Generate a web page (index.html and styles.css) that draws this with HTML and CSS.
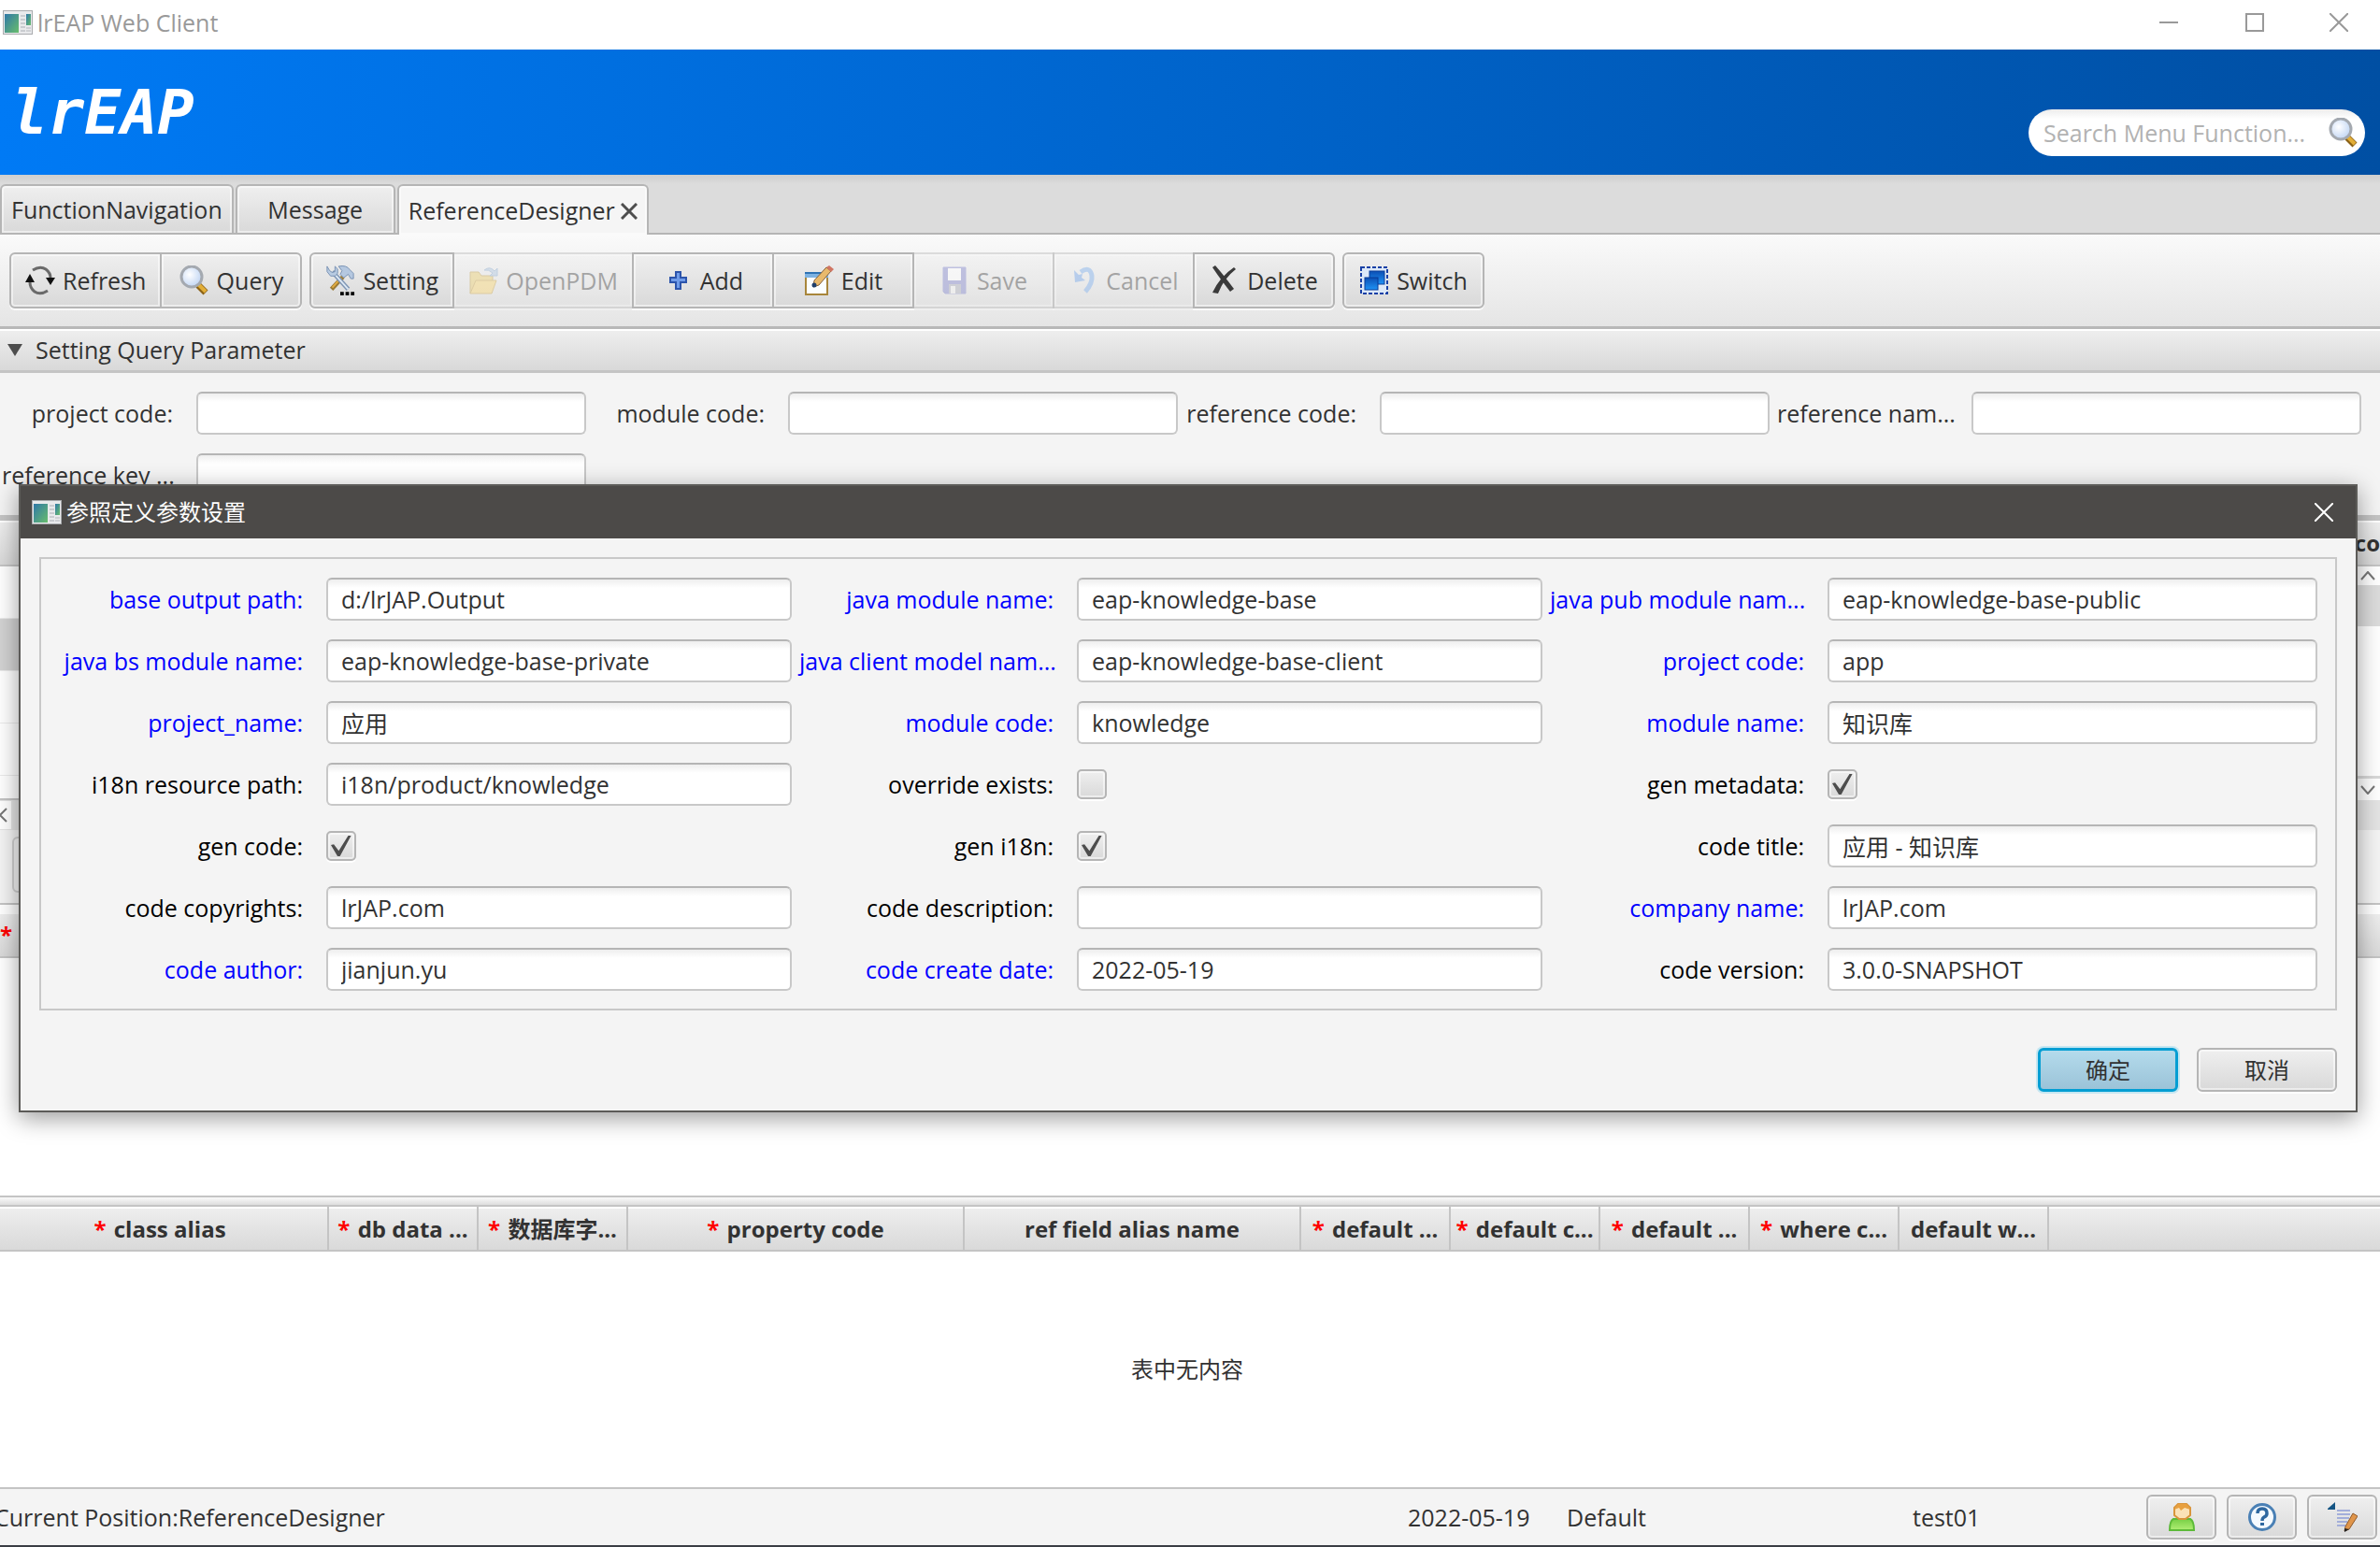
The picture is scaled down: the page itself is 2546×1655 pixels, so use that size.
FILE: index.html
```html
<!DOCTYPE html>
<html lang="en">
<head>
    <meta charset="UTF-8">
    <meta name="viewport" content="width=device-width, initial-scale=1.0">
    <title>lrEAP Web Client</title>
    <link rel="stylesheet" href="styles.css">
</head>
<body>
    <!-- Shared icons -->
    <svg class="defs" aria-hidden="true">
        <defs>
            <linearGradient id="g-app" x1="0" y1="0" x2="1" y2="1">
                <stop offset="0" stop-color="#2f78a8"/>
                <stop offset="1" stop-color="#69bd6c"/>
            </linearGradient>
            <radialGradient id="g-lens" cx="0.4" cy="0.4" r="0.7">
                <stop offset="0" stop-color="#ffffff"/>
                <stop offset="1" stop-color="#b9d0f2"/>
            </radialGradient>
            <linearGradient id="g-blue" x1="0" y1="0" x2="0" y2="1">
                <stop offset="0" stop-color="#0c4fb4"/>
                <stop offset="1" stop-color="#1f93f5"/>
            </linearGradient>
            <linearGradient id="g-green" x1="0" y1="0" x2="0" y2="1">
                <stop offset="0" stop-color="#77cf45"/>
                <stop offset="1" stop-color="#b0ee74"/>
            </linearGradient>
            <symbol id="i-app" viewBox="0 0 32 26">
                <rect x="0.5" y="0.5" width="31" height="25" fill="#e9eaec" stroke="#a9abae"/>
                <rect x="2" y="4" width="15" height="20" fill="url(#g-app)"/>
                <path d="M19 6h5M19 10h5M19 14h5M19 18h5M19 22h5" stroke="#bfc2c6" stroke-width="1.5"/>
                <rect x="25" y="4" width="5" height="12" fill="url(#g-app)"/>
                <path d="M25 19h5M25 22h5" stroke="#c5c8cb" stroke-width="1.5"/>
            </symbol>
            <symbol id="i-search" viewBox="0 0 32 32">
                <path d="M20 21l8 8" stroke="#8a6116" stroke-width="7"/>
                <path d="M20 20l8 8" stroke="#e2ae38" stroke-width="4"/>
                <circle cx="13" cy="12" r="11" fill="url(#g-lens)" stroke="#a4a9b0" stroke-width="3"/>
            </symbol>
            <symbol id="i-refresh" viewBox="0 0 32 32">
                <path d="M8 5Q16 0 22 4Q27 8 27 13M24 27Q16 32 10 28Q5 24 5 18" fill="none" stroke="#6a6a6a" stroke-width="3"/>
                <path d="M0 18L5 9l5 9zM22 13h10l-5 8z" fill="#111"/>
            </symbol>
            <symbol id="i-setting" viewBox="0 0 32 34">
                <path d="M19 13L6 27" stroke="#9b7a35" stroke-width="5"/>
                <path d="M17 14L7 25" stroke="#e3ac42" stroke-width="2"/>
                <path d="M7 7L25 27" stroke="#7e95b3" stroke-width="5"/>
                <path d="M8 8L25 27" stroke="#dce8f5" stroke-width="2"/>
                <path d="M1 1v6l4 5h5l3-3V4l-3-3v6l-3 1-3-2z" fill="#b8cbe2" stroke="#7690b2"/>
                <path d="M14 1q9-2 13 4l4 4v6h-3l-3-5-5 4-4-4 2-4z" fill="#b5c8e0" stroke="#7690b2"/>
                <path d="M16 30h4v4h-4zM22 30h4v4h-4zM28 30h4v4h-4z" fill="#000"/>
            </symbol>
            <symbol id="i-open" viewBox="0 0 32 32">
                <path d="M2 30V7h9l3 4h12v6" fill="#e7c65c" stroke="#b99334"/>
                <path d="M2 30l6-14h22l-5 14z" fill="#f6cf61" stroke="#c39a36"/>
                <path d="M17 5q6-5 11 1l3-3v8h-8l3-3q-4-4-9-3z" fill="#a5bedb" stroke="#7d9fc6"/>
            </symbol>
            <symbol id="i-add" viewBox="0 0 32 32">
                <path d="M14 7h5v6h6v5h-6v7h-5v-7H8v-5h6z" fill="#6f9be8" stroke="#2c54ab" stroke-width="2"/>
            </symbol>
            <symbol id="i-edit" viewBox="0 0 32 32">
                <rect x="2" y="8" width="23" height="23" fill="#fbfeff" stroke="#a8863b" stroke-width="2"/>
                <path d="M1 7h25v6H1z" fill="#7db2e2"/>
                <path d="M1 8h25" stroke="#2f73b4" stroke-width="2"/>
                <path d="M11 16L24 2l5 4-13 15-6 2z" fill="#e8b96c" stroke="#86613a"/>
                <path d="M24 2l3-2 5 4-3 3z" fill="#d07563"/>
                <circle cx="11" cy="21" r="2.5" fill="#1f3f6b"/>
            </symbol>
            <symbol id="i-save" viewBox="0 0 32 32">
                <path d="M4 2h24v28H6l-2-2z" fill="#7377c4" stroke="#7377c4"/>
                <rect x="9" y="3" width="14" height="13" fill="#fff"/>
                <path d="M10 20h13v10H10z" fill="#a0a3b2"/>
                <path d="M12 22h5v8h-5z" fill="#eee"/>
            </symbol>
            <symbol id="i-undo" viewBox="0 0 32 32">
                <path d="M13 7q10-7 12 4q1 8-7 17" fill="none" stroke="#6da3e8" stroke-width="5"/>
                <path d="M6 5l1 13 11-2-4-3 1-4-4 1z" fill="#6199e5"/>
            </symbol>
            <symbol id="i-delete" viewBox="0 0 32 32">
                <path d="M6 0q8 9 20 25l-4 3Q11 14 3 2z" fill="#3a3a3a"/>
                <path d="M26 2l2 2Q15 14 9 30l-6-1Q11 12 26 2z" fill="#3a3a3a"/>
            </symbol>
            <symbol id="i-switch" viewBox="0 0 32 32">
                <rect x="2" y="2" width="28" height="28" fill="#dce8f8" stroke="#1840a6" stroke-width="2" stroke-dasharray="4 2"/>
                <rect x="11" y="6" width="16" height="14" fill="url(#g-blue)" stroke="#0b3e99"/>
                <rect x="6" y="13" width="14" height="13" fill="url(#g-blue)" stroke="#083b96"/>
            </symbol>
            <symbol id="i-user" viewBox="0 0 32 32">
                <path d="M7 18h18q4 2 4 12H3Q3 20 7 18z" fill="url(#g-green)" stroke="#5cba38" stroke-width="2"/>
                <path d="M12 2h9l4 4v8l-5 4h-7l-5-4V6z" fill="#fbe2b6" stroke="#d9953b" stroke-width="2"/>
                <path d="M8 8l4-6h9l4 6-6-2-4 3-2-3z" fill="#e8a03f"/>
            </symbol>
            <symbol id="i-help" viewBox="0 0 32 32">
                <circle cx="16" cy="16" r="13.5" fill="#f5faff" stroke="#4a80b5" stroke-width="3"/>
                <path d="M11 12q0-5 5-5t5 5q0 3-3 4-2 1-2 4" fill="none" stroke="#2f68a0" stroke-width="3.5"/>
                <rect x="14" y="22" width="4" height="3" fill="#2f68a0"/>
            </symbol>
            <symbol id="i-log" viewBox="0 0 32 32">
                <path d="M0 7L8 0v8H0z" fill="#145483"/>
                <path d="M10 9h14M10 13h14M10 17h13M10 21h11M10 25h9" stroke="#a3aeda" stroke-width="2"/>
                <path d="M27 12l5 3-9 14-5 2 1-5z" fill="#e0954a" stroke="#8f5a2b"/>
                <path d="M18 28l5 1-5 3z" fill="#222"/>
            </symbol>
        </defs>
    </svg>

    <!-- Window title bar -->
    <div class="titlebar">
        <svg class="app-icon"><use href="#i-app"/></svg>
        <span class="window-title">lrEAP Web Client</span>
        <div class="window-btns">
            <button aria-label="Minimize"><svg viewBox="0 0 20 20"><path d="M0 10h20"/></svg></button>
            <button aria-label="Maximize"><svg viewBox="0 0 20 20"><path d="M1 1h18v18H1z"/></svg></button>
            <button aria-label="Close"><svg viewBox="0 0 20 20"><path d="M0 0l20 20M20 0L0 20"/></svg></button>
        </div>
    </div>

    <header class="header">
        <h1 class="logo">lrEAP</h1>
        <div class="search">
            <input type="text" aria-label="Search Menu Function" placeholder="Search Menu Function...">
            <svg class="icon"><use href="#i-search"/></svg>
        </div>
    </header>

    <nav class="tabs">
        <button class="tab">FunctionNavigation</button>
        <button class="tab">Message</button>
        <button class="tab active">ReferenceDesigner
            <svg class="tab-close" viewBox="0 0 18 18"><path d="M1 1l16 16M17 1L1 17"/></svg>
        </button>
    </nav>

    <!-- Toolbar -->
    <div class="toolbar">
        <div class="btn-group">
            <button><svg class="icon"><use href="#i-refresh"/></svg>Refresh</button>
            <button><svg class="icon"><use href="#i-search"/></svg>Query</button>
        </div>
        <div class="btn-group">
            <button><svg class="icon"><use href="#i-setting"/></svg>Setting</button>
            <button disabled><svg class="icon"><use href="#i-open"/></svg>OpenPDM</button>
            <button><svg class="icon"><use href="#i-add"/></svg>Add</button>
            <button><svg class="icon"><use href="#i-edit"/></svg>Edit</button>
            <button disabled><svg class="icon"><use href="#i-save"/></svg>Save</button>
            <button disabled><svg class="icon"><use href="#i-undo"/></svg>Cancel</button>
            <button><svg class="icon"><use href="#i-delete"/></svg>Delete</button>
        </div>
        <div class="btn-group">
            <button><svg class="icon"><use href="#i-switch"/></svg>Switch</button>
        </div>
    </div>

    <!-- Query parameters -->
    <button class="pane-title"><span class="arrow"></span>Setting Query Parameter</button>
    <form class="query-form">
        <div class="field"><label for="q-project">project code:</label><input type="text" id="q-project"></div>
        <div class="field"><label for="q-module">module code:</label><input type="text" id="q-module"></div>
        <div class="field"><label for="q-ref">reference code:</label><input type="text" id="q-ref"></div>
        <div class="field"><label for="q-name">reference nam...</label><input type="text" id="q-name"></div>
        <div class="field"><label for="q-key">reference key ...</label><input type="text" id="q-key"></div>
    </form>

    <!-- Reference list -->
    <section class="list">
        <div class="grid-head"><span class="head-end">co</span></div>
        <div class="list-body">
            <div class="rows">
                <div class="row"></div>
                <div class="row selected"></div>
                <div class="row"></div>
                <div class="row"></div>
                <div class="row last"></div>
            </div>
            <div class="vscroll">
                <button aria-label="Scroll up"><svg viewBox="0 0 16 10"><path d="M1 9l7-8 7 8"/></svg></button>
                <div class="thumb"></div>
                <button class="down" aria-label="Scroll down"><svg viewBox="0 0 16 10"><path d="M1 1l7 8 7-8"/></svg></button>
            </div>
        </div>
        <div class="hscroll">
            <button aria-label="Scroll left"><svg viewBox="0 0 10 16"><path d="M7 1L0 8l7 7"/></svg></button>
        </div>
    </section>
    <div class="sub-toolbar"><button class="sub-btn" aria-label="Add row"></button></div>

    <section class="detail">
        <div class="grid-head"><span class="req">*</span></div>
    </section>
    <div class="splitter"></div>

    <section class="params">
        <table class="grid">
            <colgroup>
                <col class="c-first"><col class="c-sm"><col class="c-sm"><col class="c-lg"><col class="c-lg">
                <col class="c-sm"><col class="c-sm"><col class="c-sm"><col class="c-sm"><col class="c-sm"><col>
            </colgroup>
            <thead>
                <tr>
                    <th class="first"><span class="req">*</span> class alias</th>
                    <th><span class="req">*</span> db data ...</th>
                    <th><span class="req">*</span> 数据库字...</th>
                    <th><span class="req">*</span> property code</th>
                    <th>ref field alias name</th>
                    <th><span class="req">*</span> default ...</th>
                    <th><span class="req">*</span> default c...</th>
                    <th><span class="req">*</span> default ...</th>
                    <th><span class="req">*</span> where c...</th>
                    <th>default w...</th>
                    <th></th>
                </tr>
            </thead>
        </table>
        <p class="empty">表中无内容</p>
    </section>

    <footer class="statusbar">
        <span class="position">Current Position:ReferenceDesigner</span>
        <span class="date">2022-05-19</span>
        <span class="org">Default</span>
        <span class="user">test01</span>
        <div class="status-btns">
            <button aria-label="User"><svg class="icon"><use href="#i-user"/></svg></button>
            <button aria-label="Help"><svg class="icon"><use href="#i-help"/></svg></button>
            <button aria-label="Log"><svg class="icon"><use href="#i-log"/></svg></button>
        </div>
    </footer>

    <!-- Parameter dialog -->
    <div class="dialog" role="dialog" aria-labelledby="dialog-title">
        <div class="dialog-title">
            <svg class="app-icon"><use href="#i-app"/></svg>
            <span id="dialog-title">参照定义参数设置</span>
            <button class="dialog-close" aria-label="Close"><svg viewBox="0 0 20 20"><path d="M0 0l20 20M20 0L0 20"/></svg></button>
        </div>
        <form class="dialog-form">
            <div class="field must"><label for="d-out">base output path:</label><input type="text" id="d-out" value="d:/lrJAP.Output"></div>
            <div class="field must"><label for="d-mod">java module name:</label><input type="text" id="d-mod" value="eap-knowledge-base"></div>
            <div class="field must"><label for="d-pub">java pub module nam...</label><input type="text" id="d-pub" value="eap-knowledge-base-public"></div>

            <div class="field must"><label for="d-bs">java bs module name:</label><input type="text" id="d-bs" value="eap-knowledge-base-private"></div>
            <div class="field must"><label for="d-client">java client model nam...</label><input type="text" id="d-client" value="eap-knowledge-base-client"></div>
            <div class="field must"><label for="d-pcode">project code:</label><input type="text" id="d-pcode" value="app"></div>

            <div class="field must"><label for="d-pname">project_name:</label><input type="text" id="d-pname" value="应用"></div>
            <div class="field must"><label for="d-mcode">module code:</label><input type="text" id="d-mcode" value="knowledge"></div>
            <div class="field must"><label for="d-mname">module name:</label><input type="text" id="d-mname" value="知识库"></div>

            <div class="field"><label for="d-i18n">i18n resource path:</label><input type="text" id="d-i18n" value="i18n/product/knowledge"></div>
            <div class="field"><label for="d-over">override exists:</label><input type="checkbox" id="d-over"></div>
            <div class="field"><label for="d-meta">gen metadata:</label><input type="checkbox" id="d-meta" checked></div>

            <div class="field"><label for="d-gcode">gen code:</label><input type="checkbox" id="d-gcode" checked></div>
            <div class="field"><label for="d-gi18n">gen i18n:</label><input type="checkbox" id="d-gi18n" checked></div>
            <div class="field"><label for="d-title">code title:</label><input type="text" id="d-title" value="应用 - 知识库"></div>

            <div class="field"><label for="d-copy">code copyrights:</label><input type="text" id="d-copy" value="lrJAP.com"></div>
            <div class="field"><label for="d-desc">code description:</label><input type="text" id="d-desc"></div>
            <div class="field must"><label for="d-comp">company name:</label><input type="text" id="d-comp" value="lrJAP.com"></div>

            <div class="field must"><label for="d-author">code author:</label><input type="text" id="d-author" value="jianjun.yu"></div>
            <div class="field must"><label for="d-date">code create date:</label><input type="text" id="d-date" value="2022-05-19"></div>
            <div class="field"><label for="d-ver">code version:</label><input type="text" id="d-ver" value="3.0.0-SNAPSHOT"></div>
        </form>
        <div class="dialog-btns">
            <button class="btn primary">确定</button>
            <button class="btn">取消</button>
        </div>
    </div>
</body>
</html>
```
FILE: styles.css
```css
/* General Styles */
* {
    box-sizing: border-box;
}

body {
    margin: 0;
    min-height: 100vh;
    display: flex;
    flex-direction: column;
    position: relative;
    overflow: hidden;
    background: #f4f4f4;
    color: #323232;
    font-family: 'Open Sans', 'Noto Sans CJK SC', sans-serif;
    font-size: 25px;
    line-height: 34px;
}

button,
input {
    font: inherit;
    color: inherit;
}

button {
    padding: 0;
    border: none;
    background: none;
    white-space: nowrap;
}

.defs {
    position: absolute;
    width: 0;
    height: 0;
}

.icon {
    width: 32px;
    height: 32px;
    flex: none;
}

.app-icon {
    width: 32px;
    height: 26px;
    flex: none;
}

.req {
    color: #ff0000;
}

/* Title bar */
.titlebar {
    display: flex;
    align-items: center;
    height: 53px;
    padding-left: 3px;
    padding-bottom: 5px;
    background: #fff;
    color: #999;
}

.window-title {
    margin-left: 5px;
    flex: 1;
}

.window-btns {
    display: flex;
}

.window-btns button {
    width: 92px;
    height: 40px;
}

.window-btns button:last-child {
    width: 88px;
}

.window-btns svg,
.dialog-close svg {
    width: 20px;
    height: 20px;
    display: block;
    margin: auto;
    fill: none;
    stroke: #999;
    stroke-width: 2;
}

/* Header */
.header {
    display: flex;
    justify-content: space-between;
    align-items: flex-start;
    height: 134px;
    padding: 0 16px 0 12px;
    background: linear-gradient(to right, #007af5, #004fa3);
}

.logo {
    margin: 31px 0 0;
    font-family: 'DejaVu Sans Mono', monospace;
    font-size: 65px;
    line-height: 74px;
    font-style: italic;
    font-weight: bold;
    color: #fff;
}

.search {
    display: flex;
    align-items: center;
    width: 360px;
    height: 50px;
    margin-top: 64px;
    padding: 0 7px 0 16px;
    border-radius: 25px;
    background: linear-gradient(#ececec, #fff 10px);
}

.search input {
    flex: 1;
    min-width: 0;
    padding: 0;
    border: none;
    outline: none;
    background: none;
}

.search input::placeholder {
    color: #b2b2b2;
    opacity: 1;
}

/* Tabs */
.tabs {
    display: flex;
    gap: 2px;
    height: 64px;
    padding-top: 10px;
    background: linear-gradient(#cecece, #dcdcdc 10px);
    box-shadow: inset 0 -2px #b5b5b5;
}

.tab {
    min-width: 171px;
    padding: 0 10px;
    border: 2px solid #b5b5b5;
    border-radius: 6px 6px 0 0;
    background: linear-gradient(#efefef, #d9d9d9);
    box-shadow: inset 0 0 0 2px rgba(255, 255, 255, 0.5);
}

.tab.active {
    border-bottom: none;
    background: #f5f5f5;
}

.tab-close {
    width: 18px;
    height: 18px;
    fill: none;
    stroke: #4d4d4d;
    stroke-width: 3;
}

/* Toolbar */
.toolbar {
    display: flex;
    align-items: center;
    gap: 8px;
    height: 101px;
    padding: 0 10px;
    background: linear-gradient(#fafafa, #e5e5e5);
    border-bottom: 3px solid #b8b8b8;
}

.btn-group {
    display: flex;
}

.btn-group button {
    display: flex;
    align-items: center;
    justify-content: center;
    gap: 8px;
    min-width: 152px;
    height: 60px;
    margin-left: -2px;
    padding: 0 15px;
    border: 2px solid #b5b5b5;
    background: linear-gradient(#efefef, #d9d9d9);
    box-shadow: inset 0 0 0 2px rgba(255, 255, 255, 0.5), 0 2px #fafafa;
}

.btn-group button:first-child {
    margin-left: 0;
    border-radius: 6px 0 0 6px;
}

.btn-group button:last-child {
    border-radius: 0 6px 6px 0;
}

.btn-group button:only-child {
    border-radius: 6px;
}

.btn-group button:disabled {
    opacity: 0.4;
}

/* Titled pane */
.pane-title {
    display: flex;
    align-items: center;
    gap: 14px;
    height: 47px;
    padding-left: 8px;
    border-bottom: 3px solid #c4c4c4;
    background: linear-gradient(#efefef, #d9d9d9);
    box-shadow: inset 0 2px #fff;
}

.arrow {
    border: 8px solid transparent;
    border-top: 13px solid #4d4d4d;
    border-bottom: none;
}

.field {
    display: flex;
    align-items: center;
    min-width: 0;
    height: 46px;
}

.field label {
    flex: none;
    text-align: right;
    white-space: nowrap;
}

.field input[type="text"] {
    flex: 1;
    min-width: 0;
    height: 46px;
    padding: 0 14px;
    border: 2px solid #c8c8c8;
    border-top-color: #b5b5b5;
    border-radius: 6px;
    outline: none;
    background: linear-gradient(#eee, #fff 9px);
}

.query-form {
    display: grid;
    grid-template-columns: repeat(4, 1fr);
    gap: 20px 8px;
    padding: 20px 20px 20px 2px;
    border-bottom: 6px solid #c4c4c4;
}

.query-form label {
    width: 183px;
    margin-right: 25px;
}

/* Reference list */
.grid-head {
    display: flex;
    align-items: center;
    height: 49px;
    border-bottom: 2px solid #c4c4c4;
    background: linear-gradient(#efefef, #d9d9d9);
    box-shadow: inset 0 2px #fff;
    font-size: 24px;
    font-weight: bold;
}

.head-end {
    margin-left: auto;
}

.list-body {
    display: flex;
    background: #fff;
}

.rows {
    flex: 1;
}

.row {
    height: 56px;
    border-bottom: 1px solid #ebebeb;
}

.row.selected {
    background: #d3d3d3;
}

.row.last {
    height: 26px;
    border-bottom: 2px solid #c4c4c4;
}

.vscroll {
    display: flex;
    flex-direction: column;
    width: 26px;
}

.vscroll button,
.hscroll button {
    height: 20px;
}

.vscroll svg {
    width: 16px;
    height: 10px;
    display: block;
    margin: auto;
    fill: none;
    stroke: #777;
    stroke-width: 2;
}

.thumb {
    height: 44px;
    background: #dcdcdc;
}

.vscroll .down {
    height: 26px;
    margin-top: auto;
    border-top: 3px solid #d9d9d9;
}

.hscroll {
    display: flex;
    align-items: center;
    height: 32px;
    background: #e4e4e4;
}

.hscroll button {
    width: 12px;
    height: 30px;
    background: #fff;
}

.hscroll svg {
    display: block;
    width: 10px;
    height: 20px;
    fill: none;
    stroke: #777;
    stroke-width: 2;
}

.sub-toolbar {
    height: 80px;
    padding: 7px 13px;
    border-bottom: 2px solid #c4c4c4;
}

.sub-btn {
    width: 120px;
    height: 60px;
    border: 2px solid #d0d0d0;
    border-radius: 6px;
}

/* Detail table */
.detail {
    height: 311px;
    padding-top: 8px;
    background: #fff;
}

.splitter {
    height: 12px;
    border: 2px solid #c4c4c4;
    border-width: 2px 0;
    background: linear-gradient(#fafafa, #dedede);
}

/* Parameter table */
.params {
    display: flex;
    flex: 1;
    flex-direction: column;
    background: #fff;
}

.grid {
    width: 100%;
    table-layout: fixed;
    border-collapse: separate;
    border-spacing: 0;
}

.grid th {
    height: 48px;
    padding: 2px 0 0;
    border-right: 2px solid #c4c4c4;
    border-bottom: 2px solid #c4c4c4;
    background: linear-gradient(#efefef, #d9d9d9);
    box-shadow: inset 0 2px #fff;
    font-weight: bold;
    font-size: 24px;
    line-height: 34px;
    white-space: nowrap;
    overflow: hidden;
}

.grid th.first {
    padding-right: 8px;
}

.grid th:last-child {
    border-right: none;
}

.grid .req {
    margin-right: 2px;
}

.c-first {
    width: 352px;
}

.c-sm {
    width: 160px;
}

.c-lg {
    width: 360px;
}

.empty {
    margin: auto;
    padding-right: 6px;
    font-size: 24px;
}

/* Status bar */
.statusbar {
    display: flex;
    align-items: center;
    height: 64px;
    padding-right: 3px;
    border-top: 2px solid #c4c4c4;
    border-bottom: 2px solid #3a3d44;
}

.position {
    flex: 1;
    margin-left: -6px;
}

.date {
    width: 170px;
}

.org {
    width: 370px;
}

.user {
    width: 250px;
}

.status-btns {
    display: flex;
    gap: 11px;
}

.status-btns button {
    display: flex;
    align-items: center;
    justify-content: center;
    width: 75px;
    height: 48px;
    border: 2px solid #b5b5b5;
    border-radius: 6px;
    background: linear-gradient(#efefef, #d9d9d9);
    box-shadow: inset 0 0 0 2px rgba(255, 255, 255, 0.5), 0 2px #fff;
}

/* Dialog */
.dialog {
    position: absolute;
    top: 518px;
    left: 20px;
    right: 24px;
    border: 2px solid #5c5b58;
    background: #f4f4f4;
    box-shadow: 0 6px 24px rgba(0, 0, 0, 0.4);
}

.dialog-title {
    display: flex;
    align-items: center;
    gap: 5px;
    height: 56px;
    padding: 0 0 0 12px;
    background: #4c4a48;
    color: #fff;
    font-size: 24px;
}

.dialog-close {
    width: 68px;
    height: 50px;
    margin-left: auto;
}

.dialog-close svg {
    stroke: #fff;
}

.dialog-form {
    display: grid;
    grid-template-columns: 795fr 795fr 821fr;
    gap: 20px 8px;
    margin: 20px 20px 40px;
    padding: 20px 19px 19px 8px;
    border: 2px solid #c8c8c8;
}

.dialog-form label {
    width: 272px;
    margin-right: 25px;
    color: #000;
}

.dialog-form .must label {
    color: #0000ff;
}

.field input[type="checkbox"] {
    appearance: none;
    width: 32px;
    height: 32px;
    margin: 0;
    border: 2px solid #b5b5b5;
    border-radius: 5px;
    background: linear-gradient(#efefef, #d9d9d9);
    box-shadow: inset 0 0 0 2px rgba(255, 255, 255, 0.5), 0 2px #fff;
}

.field input[type="checkbox"]:checked::after {
    content: '';
    display: block;
    width: 22px;
    height: 22px;
    margin: 3px;
    background: #4d4d4d;
    clip-path: polygon(0 45%, 14% 42%, 38% 74%, 84% 0, 98% 0, 44% 100%, 32% 100%);
}

.dialog-btns {
    display: flex;
    justify-content: flex-end;
    gap: 20px;
    padding: 0 20px 20px;
}

.btn {
    width: 150px;
    height: 47px;
    border: 2px solid #b5b5b5;
    border-radius: 6px;
    background: linear-gradient(#efefef, #d9d9d9);
    box-shadow: inset 0 0 0 2px rgba(255, 255, 255, 0.5), 0 2px #fff;
    font-size: 24px;
}

.btn.primary {
    border: 3px solid #039ed3;
    background: linear-gradient(#b4dbec, #9bc3d8);
    box-shadow: 0 0 0 2px #c5e6f1;
}
```
